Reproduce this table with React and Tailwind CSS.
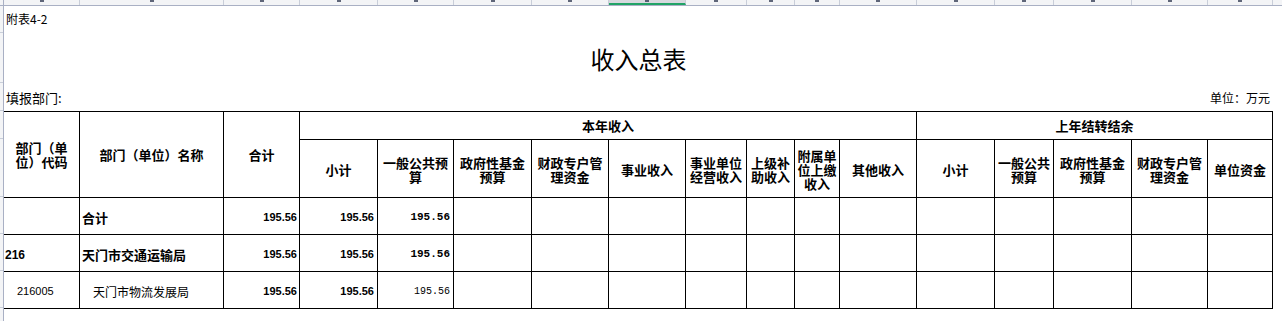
const cols = [76, 144, 76, 78, 76, 78, 77, 77, 61, 48, 45, 77, 78, 59, 78, 76, 65];

// 表头第二行
const subHeads = [
  ['小计'],
  ['一般公共预', '算'],
  ['政府性基金', '预算'],
  ['财政专户管', '理资金'],
  ['事业收入'],
  ['事业单位', '经营收入'],
  ['上级补', '助收入'],
  ['附属单', '位上缴', '收入'],
  ['其他收入'],
  ['小计'],
  ['一般公共', '预算'],
  ['政府性基金', '预算'],
  ['财政专户管', '理资金'],
  ['单位资金'],
];

const rows = [
  { code: '', name: '合计', bold: true, indent: false },
  { code: '216', name: '天门市交通运输局', bold: true, indent: false },
  { code: '216005', name: '天门市物流发展局', bold: false, indent: true },
];

function Lines({ lines }) {
  return <div className="text-center leading-[14px] whitespace-pre-line">{lines.join('\n')}</div>;
}

export default function App() {
  const gridCols =
    'grid-cols-[76px_144px_76px_78px_76px_78px_77px_77px_61px_48px_45px_77px_78px_59px_78px_76px_65px]';

  return (
    <div className="w-[1282px] h-[321px] bg-white overflow-hidden text-black font-['Noto_Sans_CJK_SC',sans-serif]">
      {/* 列标题条 */}
      <div className="flex h-[6px] bg-[#f3f4f6] border-b border-[#a9b0c4]">
        <div className="w-[4px] border-r border-[#a9b0c4]" />
        {cols.map((w, i) => (
          <div
            key={i}
            style={{ width: w }}
            className={`shrink-0 border-r border-[#c9ced9] flex justify-center ${i === 7 ? 'bg-[#d6d9de] border-b-2 border-b-[#21a366]' : ''}`}
          >
            <div className="w-[4px] h-[2px] bg-[#1f2a44] opacity-70" />
          </div>
        ))}
      </div>

      <div className="flex">
        {/* 行号 */}
        <div className="w-[4px] shrink-0 flex flex-col bg-[#f3f4f6] border-r border-[#a9b0c4]">
          <div className="h-[27px] border-b border-[#c9ced9]" />
          <div className="h-[50px] border-b border-[#c9ced9]" />
          <div className="h-[28px] border-b border-[#c9ced9]" />
          <div className="h-[28px] border-b border-[#c9ced9]" />
          <div className="h-[58px] border-b border-[#c9ced9]" />
          <div className="h-[37px] border-b border-[#c9ced9]" />
          <div className="h-[37px] border-b border-[#c9ced9]" />
          <div className="h-[37px] border-b border-[#c9ced9]" />
          <div className="h-[20px]" />
        </div>

        <div className="flex flex-col">
          <div className="h-[26px] flex items-center pl-[2px] text-[12px]">附表4-2</div>
          <div className="h-[53px] w-[1269px] flex items-center justify-center text-[24px]">
            收入总表
          </div>
          <div className="h-[26px] w-[1269px] flex items-center justify-between pl-[2px] pr-[3px]">
            <span className="text-[13px]">填报部门:</span>
            <span className="text-[12px]">单位：万元</span>
          </div>

          {/* 表格 */}
          <div className={`grid ${gridCols} grid-rows-[28px_58px_37px_37px_37px] border-t border-black w-[1269px] text-[13px] font-bold`}>
            <div className="row-span-2 border-r border-b border-black flex items-center justify-center">
              <Lines lines={['部门（单', '位）代码']} />
            </div>
            <div className="row-span-2 border-r border-b border-black flex items-center justify-center">
              部门（单位）名称
            </div>
            <div className="row-span-2 border-r border-b border-black flex items-center justify-center">
              合计
            </div>
            <div className="col-span-9 border-r border-b border-black flex items-center justify-center">
              本年收入
            </div>
            <div className="col-span-5 border-r border-b border-black flex items-center justify-center">
              上年结转结余
            </div>
            {subHeads.map((lines, i) => (
              <div key={i} className="border-r border-b border-black flex items-center justify-center pt-[2px] whitespace-nowrap">
                <Lines lines={lines} />
              </div>
            ))}

            {rows.map((r, ri) => (
              <div key={ri} className="contents">
                <div
                  className={`border-r border-b border-black flex items-center pt-[3px] font-['Liberation_Sans',sans-serif] ${
                    r.indent ? 'pl-[13px] text-[11px] font-normal' : 'pl-[1px] text-[12px] font-bold'
                  }`}
                >
                  {r.code}
                </div>
                <div
                  className={`border-r border-b border-black flex items-center pt-[3px] whitespace-nowrap ${
                    r.indent ? 'pl-[13px] text-[12px] font-normal' : 'pl-[2px] text-[13px] font-bold'
                  }`}
                >
                  {r.name}
                </div>
                <div className="border-r border-b border-black flex items-center justify-end pr-[2px] pt-[3px] text-[11px] font-bold font-['Liberation_Sans',sans-serif]">
                  195.56
                </div>
                <div className="border-r border-b border-black flex items-center justify-end pr-[3px] pt-[3px] text-[11px] font-bold font-['Liberation_Sans',sans-serif]">
                  195.56
                </div>
                <div
                  className={`border-r border-b border-black flex items-center justify-end pr-[3px] pt-[3px] font-['Liberation_Mono',monospace] ${
                    r.bold ? 'text-[11px] font-bold' : 'text-[10px] font-normal'
                  }`}
                >
                  195.56
                </div>
                {Array.from({ length: 12 }).map((_, ci) => (
                  <div key={ci} className="border-r border-b border-black" />
                ))}
              </div>
            ))}
          </div>
        </div>
      </div>
    </div>
  );
}
